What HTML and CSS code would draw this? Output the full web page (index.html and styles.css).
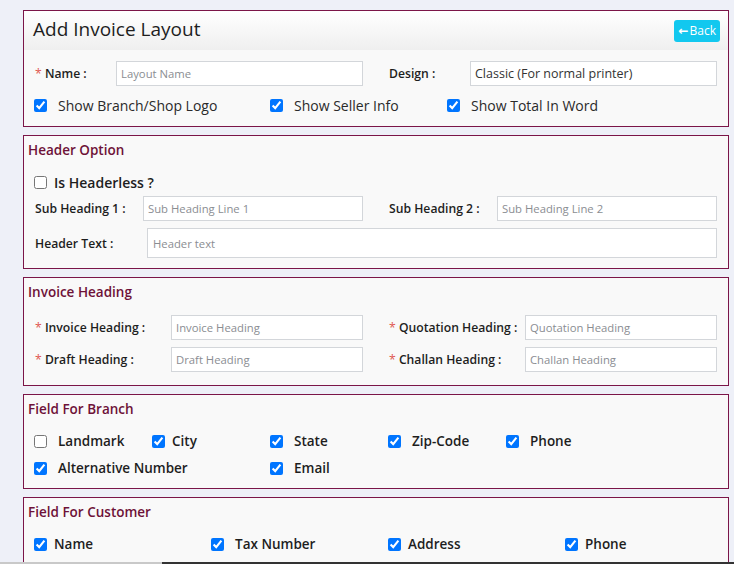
FILE: index.html
```html
<!DOCTYPE html>
<html>
<head>
<meta charset="utf-8">
<link rel="stylesheet" href="styles.css">
</head>
<body>
<div class="page">
  <section class="card">
    <div class="card-head">
      <h1 class="page-title">Add Invoice Layout</h1>
      <button class="btn-back"><span class="arrow">&#8592;</span>Back</button>
    </div>
    <div class="card-body first">
      <div class="pair-row lw-81">
        <div class="pair"><label class="lbl"><span class="req">*</span> Name :</label><input class="inp" placeholder="Layout Name"></div>
        <div class="pair"><label class="lbl">Design :</label><input class="inp filled" value="Classic (For normal printer)"></div>
      </div>
      <div class="checks cols-top">
        <label class="chk light"><input type="checkbox" checked><span>Show Branch/Shop Logo</span></label>
        <label class="chk light"><input type="checkbox" checked><span>Show Seller Info</span></label>
        <label class="chk light"><input type="checkbox" checked><span>Show Total In Word</span></label>
      </div>
    </div>
  </section>

  <section class="card">
    <h2 class="sec-title">Header Option</h2>
    <div class="sec-body">
      <label class="chk headerless near"><input type="checkbox"><span>Is Headerless ?</span></label>
      <div class="pair-row lw-108 tight">
        <div class="pair"><label class="lbl">Sub Heading 1 :</label><input class="inp" placeholder="Sub Heading Line 1"></div>
        <div class="pair"><label class="lbl">Sub Heading 2 :</label><input class="inp" placeholder="Sub Heading Line 2"></div>
      </div>
      <div class="pair full">
        <label class="lbl w-112">Header Text :</label><input class="inp tall" placeholder="Header text">
      </div>
    </div>
  </section>

  <section class="card">
    <h2 class="sec-title">Invoice Heading</h2>
    <div class="sec-body spaced">
      <div class="pair-row lw-136">
        <div class="pair"><label class="lbl"><span class="req">*</span> Invoice Heading :</label><input class="inp" placeholder="Invoice Heading"></div>
        <div class="pair"><label class="lbl"><span class="req">*</span> Quotation Heading :</label><input class="inp" placeholder="Quotation Heading"></div>
      </div>
      <div class="pair-row lw-136">
        <div class="pair"><label class="lbl"><span class="req">*</span> Draft Heading :</label><input class="inp" placeholder="Draft Heading"></div>
        <div class="pair"><label class="lbl"><span class="req">*</span> Challan Heading :</label><input class="inp" placeholder="Challan Heading"></div>
      </div>
    </div>
  </section>

  <section class="card">
    <h2 class="sec-title">Field For Branch</h2>
    <div class="sec-body spaced-lg">
      <div class="checks cols-6">
        <label class="chk"><input type="checkbox"><span>Landmark</span></label>
        <label class="chk near"><input type="checkbox" checked><span>City</span></label>
        <label class="chk"><input type="checkbox" checked><span>State</span></label>
        <label class="chk"><input type="checkbox" checked><span>Zip-Code</span></label>
        <label class="chk"><input type="checkbox" checked><span>Phone</span></label>
        <span></span>
        <label class="chk span-2"><input type="checkbox" checked><span>Alternative Number</span></label>
        <label class="chk"><input type="checkbox" checked><span>Email</span></label>
      </div>
    </div>
  </section>

  <section class="card">
    <h2 class="sec-title">Field For Customer</h2>
    <div class="sec-body spaced-lg">
      <div class="checks cols-4">
        <label class="chk near"><input type="checkbox" checked><span>Name</span></label>
        <label class="chk"><input type="checkbox" checked><span>Tax Number</span></label>
        <label class="chk near"><input type="checkbox" checked><span>Address</span></label>
        <label class="chk near"><input type="checkbox" checked><span>Phone</span></label>
      </div>
    </div>
  </section>
</div>
<div class="hscroll"></div>
</body>
</html>
```

FILE: styles.css
```css
* { box-sizing: border-box; }
html, body { margin: 0; padding: 0; }
body {
  background: #eef0f8;
  font-family: "Open Sans", "DejaVu Sans", sans-serif;
  color: #212529;
  height: 564px;
  overflow: hidden;
}
.page {
  padding: 10px 5px 0 23px;
}
.card {
  border: 1px solid #7b1548;
  background: #f9f9f9;
  margin-bottom: 8px;
}
.card-head {
  height: 39px;
  display: flex;
  align-items: center;
  justify-content: space-between;
  padding: 0 8px 0 9px;
  background: linear-gradient(#ffffff, #efefef);
}
.page-title {
  margin: 0 0 3px 0;
  font-size: 19px;
  font-weight: 500;
  color: #1e1e1e;
}
.btn-back {
  border: 0;
  background: #12c8ef;
  color: #fff;
  border-radius: 3px;
  height: 22px;
  padding: 0 4px;
  font-family: inherit;
  font-size: 12px;
  display: flex;
  align-items: center;
  gap: 1px;
}
.btn-back .arrow { font-size: 12px; font-weight: 700; }
.card-body.first { padding: 11px 11px 12px 11px; }
.pair-row {
  display: grid;
  grid-template-columns: 328px 328px;
  column-gap: 26px;
}
.pair { display: flex; align-items: center; }
.lbl {
  font-size: 12.2px;
  font-weight: 600;
  color: #1e1e1e;
  flex: none;
  white-space: nowrap;
}
.req { color: #e0574f; font-weight: 400; }
.lw-81 .lbl { width: 81px; }
.lw-108 .lbl { width: 108px; }
.lw-136 .lbl { width: 136px; }
.w-112 { width: 112px; }
.inp {
  flex: 1;
  min-width: 0;
  height: 25px;
  border: 1px solid #d3d6da;
  background: #fff;
  padding: 0 4px;
  font-family: inherit;
  font-size: 11.3px;
  color: #333;
  outline: none;
}
.inp::placeholder { color: #8a8d92; }
.inp.filled { font-size: 12.5px; color: #333; }
.inp.tall { height: 30px; padding: 0 5px; }
.checks { display: grid; align-items: center; }
.cols-top { grid-template-columns: 236px 177px auto; margin-top: 10px; margin-left: -1px; }
.cols-6 { grid-template-columns: repeat(6, 118px); row-gap: 9px; margin-left: -1px; }
.cols-4 { grid-template-columns: repeat(4, 177px); margin-left: -1px; }
.span-2 { grid-column: span 2; }
.chk {
  display: flex;
  align-items: center;
  font-size: 13.5px;
  font-weight: 600;
  color: #1e1e1e;
  height: 18px;
}
.chk input {
  margin: 0 11px 0 0;
  width: 13px;
  height: 13px;
}
.chk.near input { margin-right: 7px; }
.chk.light { font-weight: 400; color: #2a2a2a; font-size: 14px; }
.sec-title {
  margin: 0;
  padding: 6px 4px 0 4px;
  font-size: 13.5px;
  font-weight: 600;
  color: #6e1238;
  line-height: 16px;
}
.sec-body { padding: 0 11px 10px 11px; }
.headerless { margin-top: 15px; margin-bottom: 5px; margin-left: -1px; font-size: 14px; }
.pair-row.tight { margin-bottom: 7px; }
.pair.full .inp { flex: 1; }
.sec-body.spaced { padding-top: 15px; padding-bottom: 13px; }
.sec-body.spaced .pair-row + .pair-row { margin-top: 7px; }
.sec-body.spaced-lg { padding-top: 15px; padding-bottom: 11px; }
.hscroll {
  position: fixed;
  left: 0;
  right: 0;
  bottom: 0;
  height: 2px;
  background: linear-gradient(to right, #c9c9c9 162px, #333 162px);
}
```
